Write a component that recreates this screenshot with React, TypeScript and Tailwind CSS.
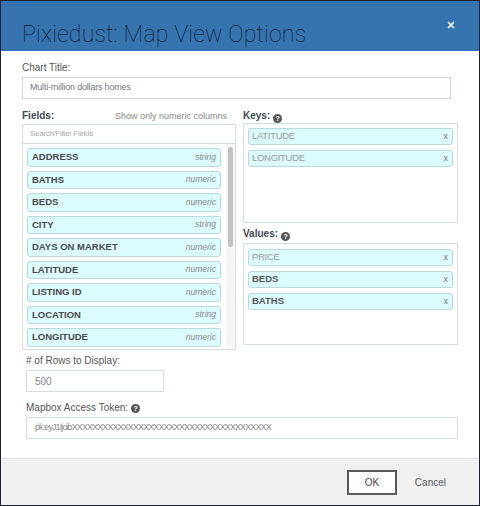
import { X } from 'lucide-react'

type Field = { name: string; type: string }

const fields: Field[] = [
  { name: 'ADDRESS', type: 'string' },
  { name: 'BATHS', type: 'numeric' },
  { name: 'BEDS', type: 'numeric' },
  { name: 'CITY', type: 'string' },
  { name: 'DAYS ON MARKET', type: 'numeric' },
  { name: 'LATITUDE', type: 'numeric' },
  { name: 'LISTING ID', type: 'numeric' },
  { name: 'LOCATION', type: 'string' },
  { name: 'LONGITUDE', type: 'numeric' },
]

function Help() {
  return (
    <span className="inline-flex w-[9px] h-[9px] rounded-full bg-[#555] text-white text-[7px] font-bold items-center justify-center leading-none ml-[3px]">
      ?
    </span>
  )
}

function Chip({ label, strong }: { label: string; strong?: boolean }) {
  return (
    <div className="h-[17px] flex items-center justify-between px-[3px] rounded-[3px] border border-[#b9d9dc] bg-[#dcfbfd]">
      <span className={strong ? 'text-[9.5px] font-bold text-[#555]' : 'text-[9.5px] text-[#9a9a9a] tracking-[-0.3px]'}>{label}</span>
      <span className="text-[9px] text-[#777] pr-[1px]">x</span>
    </div>
  )
}

export default function App() {
  return (
    <div className="w-[480px] h-[506px] border border-[#1d2230] bg-white flex flex-col overflow-hidden" style={{ fontFamily: '"Liberation Sans", Arial, sans-serif' }}>
      <header className="h-[50px] shrink-0 bg-[#3674b0] flex items-end justify-between pl-[21px] pr-[23px] pb-[1px]">
        <h1 className="text-[23px] leading-[30px] text-[#0a121a] tracking-[0.2px]" style={{ fontFamily: 'Roboto, sans-serif', fontWeight: 100 }}>
          Pixiedust: Map View Options
        </h1>
        <X className="text-white mb-[20px]" size={10} strokeWidth={4} />
      </header>

      <main className="flex-1 pl-[21px] pt-[11px]">
        <label className="block text-[10px] text-[#555] leading-[12px]">Chart Title:</label>
        <div className="mt-[3px] w-[429px] h-[22px] border border-[#cfdcdc] flex items-center px-[7px] text-[9px] text-[#777] tracking-[-0.2px]">
          Multi-million dollars homes
        </div>

        <div className="flex gap-[7px] mt-[10px]">
          <div className="w-[214px]">
            <div className="flex justify-between items-end h-[14px] pr-[9px]">
              <span className="text-[10px] font-bold text-[#3c4a55]">Fields:</span>
              <span className="text-[9px] text-[#888]">Show only numeric columns</span>
            </div>
            <div className="mt-[1px] h-[20px] border border-[#d4dede] flex items-center px-[7px] text-[8px] text-[#aaa] tracking-[-0.3px]">
              Search/Filter Fields
            </div>
            <div className="h-[206px] border border-t-0 border-[#d4dede] flex">
              <div className="flex-1 pl-[4px] pr-[5px] pt-[4px] flex flex-col gap-[4px] overflow-hidden">
                {fields.map((f) => (
                  <div key={f.name} className="h-[18.5px] shrink-0 flex items-center justify-between px-[4px] rounded-[3px] border border-[#b9d9dc] bg-[#dcfbfd]">
                    <span className="text-[9.5px] font-bold text-[#4a4a4a]">{f.name}</span>
                    <span className="text-[8.5px] italic text-[#8a8a8a]">{f.type}</span>
                  </div>
                ))}
              </div>
              <div className="w-[9px] bg-[#f6f6f6] pt-[3px] flex justify-center">
                <div className="w-[5px] h-[100px] rounded-full bg-[#c2c2c2]" />
              </div>
            </div>
          </div>

          <div className="w-[215px]">
            <div className="h-[14px] flex items-end text-[10px] font-bold text-[#3c4a55]">
              Keys: <Help />
            </div>
            <div className="h-[100px] border border-[#d4dede] px-[4px] pt-[4px] flex flex-col gap-[5px]">
              <Chip label="LATITUDE" />
              <Chip label="LONGITUDE" />
            </div>
            <div className="mt-[4px] h-[14px] flex items-end text-[10px] font-bold text-[#3c4a55]">
              Values: <Help />
            </div>
            <div className="mt-[2px] h-[102px] border border-[#d4dede] px-[4px] pt-[5px] flex flex-col gap-[5px]">
              <Chip label="PRICE" />
              <Chip label="BEDS" strong />
              <Chip label="BATHS" strong />
            </div>
          </div>
        </div>

        <div className="pl-[4px] pt-[5px]">
          <label className="block text-[10px] text-[#555] leading-[12px]"># of Rows to Display:</label>
          <div className="mt-[3px] w-[138px] h-[22px] border border-[#d4dede] flex items-center px-[8px] text-[10px] text-[#888]">
            500
          </div>
          <label className="mt-[10px] flex items-center text-[10px] text-[#555] leading-[12px]">
            Mapbox Access Token: <Help />
          </label>
          <div className="mt-[3px] w-[432px] h-[22px] border border-[#d4dede] flex items-center px-[8px] text-[9px] text-[#888] tracking-[-0.9px]">
            pk.eyJ1IjoibXXXXXXXXXXXXXXXXXXXXXXXXXXXXXXXXXXXXXXX
          </div>
        </div>
      </main>

      <footer className="h-[47px] shrink-0 border-t border-[#e2e2e2] bg-[#f1f1f1] flex items-center justify-end pr-[33px] gap-[18px]">
        <button className="w-[50px] h-[25px] border-2 border-[#5a5a5a] bg-white text-[10px] text-[#444]">OK</button>
        <span className="text-[10px] text-[#555]">Cancel</span>
      </footer>
    </div>
  )
}
